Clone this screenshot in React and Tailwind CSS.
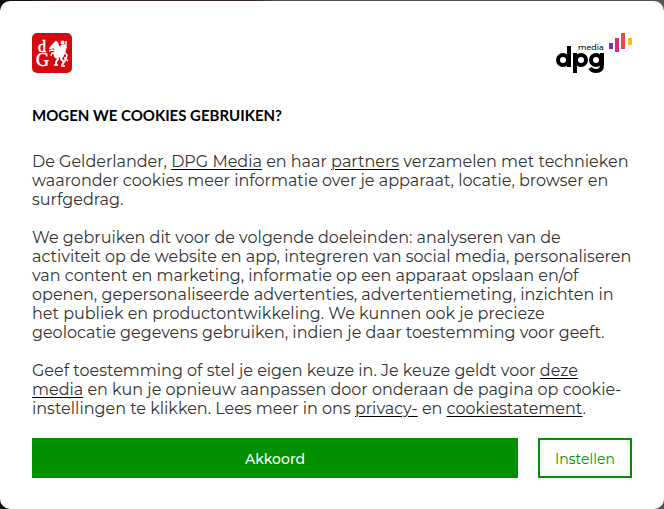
function GelderlanderLogo() {
  return (
    <svg className="size-10" viewBox="0 0 40 40" role="img" aria-label="De Gelderlander">
      <rect width="40" height="40" rx="5" fill="#d6080f" />
      <text fill="#fff" stroke="#fff" strokeWidth="0.5" fontFamily="Liberation Serif, serif">
        <tspan x="6" y="19" fontSize="16">d</tspan>
        <tspan x="4" y="33" fontSize="18">G</tspan>
      </text>
      <g fill="#fff">
        <path d="M24 7.500l2 2 1 3 2 2 3 1 1 3-1 4-1 2-4 0-3 1-2-2-0.500-3 1.500-3-1-2-2 0-2 1-1-1 2-3 2-2z" />
        <circle cx="30.500" cy="9.500" r="2" />
        <path d="M28.500 12l4-1 2 4-1 4-2 4-2-1z" />
      </g>
      <g fill="none" stroke="#fff" strokeLinejoin="round">
        <path strokeWidth="1.500" d="M24 18l-4-1-3 1M24 20l-4 0-1 3M34 8v7" />
        <path strokeWidth="2" d="M25 23l1 3-2 3 0 3M30 22l-1 4 3 3-2 3" />
        <path strokeWidth="1.500" d="M32 19l3 3-1 4 2 2M33 24l0 5M22 32h4M29 33h4" />
      </g>
    </svg>
  );
}

function DpgLogo() {
  return (
    <svg className="h-10 w-[77px]" viewBox="0 0 77 40" role="img" aria-label="DPG Media">
      <g fill="none" stroke="#000" strokeWidth="4">
        <circle cx="8" cy="27" r="5" />
        <path d="M14 13v21M20 20v20" />
        <circle cx="26" cy="27" r="5" />
        <circle cx="41" cy="27" r="5" />
        <path d="M47 20v12q0 6-6 6q-4 0-6-3" />
      </g>
      <text x="23" y="17" fontFamily="Montserrat, Lato, sans-serif" fontWeight="500" fontSize="8">media</text>
      <path fill="#673ab0" d="M54 10h4v6h-4z" />
      <path fill="#d82d82" d="M60 5h4v14h-4z" />
      <path fill="#f0483e" d="M66 0h4v16h-4z" />
      <path fill="#fdb924" d="M73 5h4v7h-4z" />
    </svg>
  );
}

function TextLink({ children }) {
  return <a href="#" className="underline decoration-black decoration-1 underline-offset-2">{children}</a>;
}

export default function App() {
  return (
    <div className="min-h-screen bg-[linear-gradient(90deg,#0c0808_0%,#352620_10%,#302320_38%,#555354_42%,#555354_100%)] pt-px font-['Montserrat','Inter',sans-serif]">
      <main className="rounded-[10px] bg-white px-8 pt-8 pb-[31px] text-black">
        <header className="flex items-start justify-between">
          <GelderlanderLogo />
          <DpgLogo />
        </header>
        <h1 className="mt-8 font-['Lato',sans-serif] text-[15px] leading-5 font-bold">MOGEN WE COOKIES GEBRUIKEN?</h1>
        <div className="mt-[27px] space-y-[19px] text-base leading-[19px] text-[#333]">
          <p>
            De Gelderlander, <TextLink>DPG Media</TextLink> en haar <TextLink>partners</TextLink> verzamelen met technieken
            waaronder cookies meer informatie over je apparaat, locatie, browser en surfgedrag.
          </p>
          <p>
            We gebruiken dit voor de volgende doeleinden: analyseren van de
            activiteit op de website en app, integreren van social media, personaliseren
            van content en marketing, informatie op een apparaat opslaan en/of
            openen, gepersonaliseerde advertenties, advertentiemeting, inzichten in
            het publiek en productontwikkeling. We kunnen ook je precieze
            geolocatie gegevens gebruiken, indien je daar toestemming voor geeft.
          </p>
          <p>
            Geef toestemming of stel je eigen keuze in. Je keuze geldt voor <TextLink>deze
            media</TextLink> en kun je opnieuw aanpassen door onderaan de pagina op
            cookie-instellingen te klikken. Lees meer in ons <TextLink>privacy-</TextLink> en <TextLink>cookiestatement</TextLink>.
          </p>
        </div>
        <div className="mt-5 flex gap-5 text-sm">
          <button className="h-10 flex-1 bg-[#009000] pt-0.5 font-medium text-white">Akkoord</button>
          <button className="h-10 w-[94px] border-2 border-[#009000] pt-0.5 text-[#009000]">Instellen</button>
        </div>
      </main>
    </div>
  );
}
